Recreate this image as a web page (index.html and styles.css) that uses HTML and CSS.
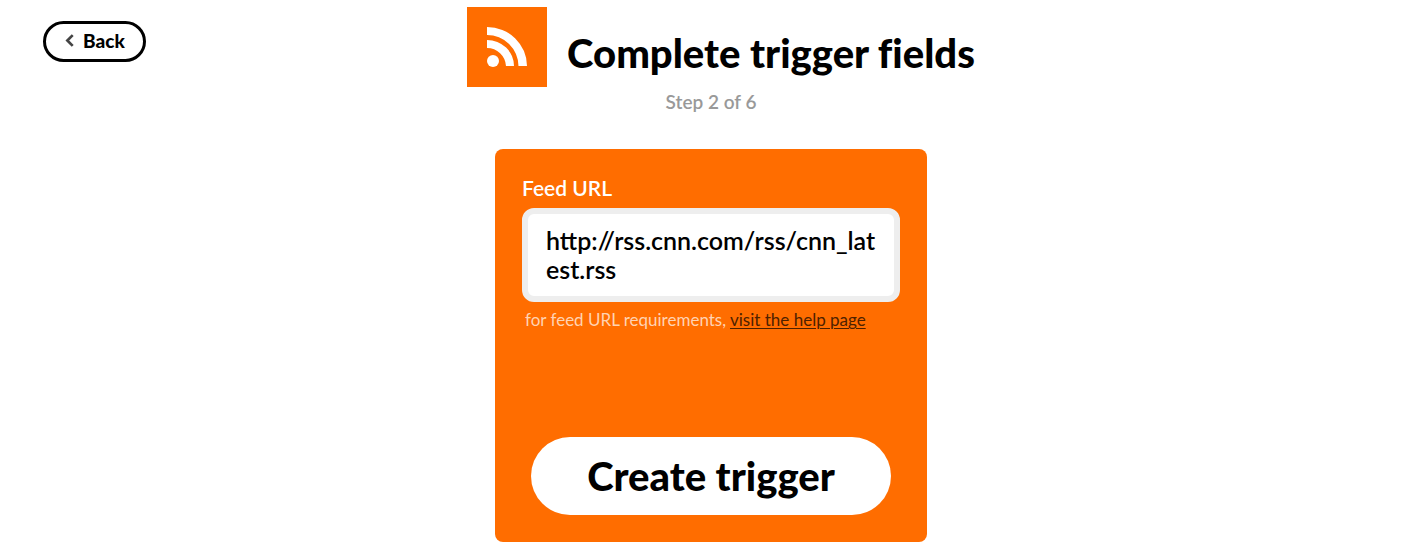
FILE: index.html
```html
<!DOCTYPE html>
<html lang="en">
<head>
<meta charset="utf-8">
<meta name="viewport" content="width=device-width, initial-scale=1">
<title>Complete trigger fields</title>
<link rel="stylesheet" href="styles.css">
</head>
<body>
<div class="page">
  <nav class="nav">
    <button class="back" type="button">
      <svg class="back-icon" viewBox="0 0 10 14" aria-hidden="true"><path d="M8 2 3 7l5 5"/></svg>
      Back
    </button>
  </nav>
  <main class="main">
    <header class="header">
      <div class="title-row">
        <svg class="service-icon" viewBox="0 0 80 80" aria-hidden="true">
          <rect width="80" height="80" fill="#ff6d00"/>
          <circle cx="26" cy="54" r="6"/>
          <path d="M20 20A40 39 0 0 1 60 59H51.500A31.500 31.500 0 0 0 20 28Z"/>
          <path d="M20 33A27 26 0 0 1 47 59H39A19 19 0 0 0 20 41Z"/>
        </svg>
        <h1 class="title">Complete trigger fields</h1>
      </div>
      <p class="step">Step 2 of 6</p>
    </header>
    <form class="card">
      <label class="label" for="feed-url">Feed URL</label>
      <textarea class="field" id="feed-url" rows="2" spellcheck="false">http://rss.cnn.com/rss/cnn_latest.rss</textarea>
      <p class="hint">for feed URL requirements, <a class="hint-link" href="#help">visit the help page</a></p>
      <button class="submit" type="button">Create trigger</button>
    </form>
  </main>
</div>
</body>
</html>
```
FILE: styles.css
```css
* {
  box-sizing: border-box;
}

body {
  margin: 0;
  background: #fff;
  color: #000;
  font-family: Lato, "Open Sans", sans-serif;
}

.page {
  display: grid;
  grid-template-columns: 1fr auto 1fr;
}

.nav {
  padding: 21px 0 0 43px;
}

.back {
  display: flex;
  align-items: center;
  gap: 8px;
  padding: 2px 18px 4px;
  border: 3px solid #000;
  border-radius: 24px;
  background: #fff;
  color: #000;
  font: inherit;
  font-size: 19px;
  font-weight: 900;
  line-height: 29px;
}

.back-icon {
  width: 11px;
  height: 15px;
  fill: none;
  stroke: #444;
  stroke-width: 2.5;
}

.main {
  display: flex;
  flex-direction: column;
  align-items: center;
  padding: 7px 0 14px;
}

.title-row {
  display: flex;
  align-items: center;
}

.service-icon {
  width: 80px;
  height: 80px;
  margin: 0 20px;
  fill: #fff;
}

.title {
  margin: 12px 0 0;
  font-size: 40px;
  font-weight: 900;
  font-variant-ligatures: none;
  line-height: 48px;
}

.step {
  margin: 3px 0 35px;
  color: #999;
  font-size: 19px;
  font-weight: 600;
  line-height: 24px;
  text-align: center;
}

.card {
  display: flex;
  flex-direction: column;
  width: 100%;
  max-width: 432px;
  padding: 27px;
  border-radius: 8px;
  background: #ff6d00;
}

.label {
  margin-bottom: 8px;
  color: #fff;
  font-size: 21px;
  font-weight: 600;
  line-height: 24px;
}

.field {
  width: 100%;
  height: 94px;
  padding: 12px 12px 12px 18px;
  border: 6px solid #eee;
  border-radius: 12px;
  outline: 0;
  background: #fff;
  color: #000;
  font: inherit;
  font-size: 25px;
  font-weight: 600;
  line-height: 29px;
  word-break: break-all;
  resize: none;
  overflow: hidden;
}

.hint {
  margin: 6px 3px 105px;
  color: #ffd3b3;
  font-size: 17px;
  font-weight: 400;
  line-height: 24px;
}

.hint-link {
  color: #4d2100;
  text-decoration-thickness: 1px;
  text-underline-offset: 2px;
}

.submit {
  margin: 0 9px;
  padding: 15px 24px;
  border: 0;
  border-radius: 39px;
  background: #fff;
  color: #000;
  font: inherit;
  font-size: 40px;
  font-weight: 900;
  line-height: 48px;
}
```
